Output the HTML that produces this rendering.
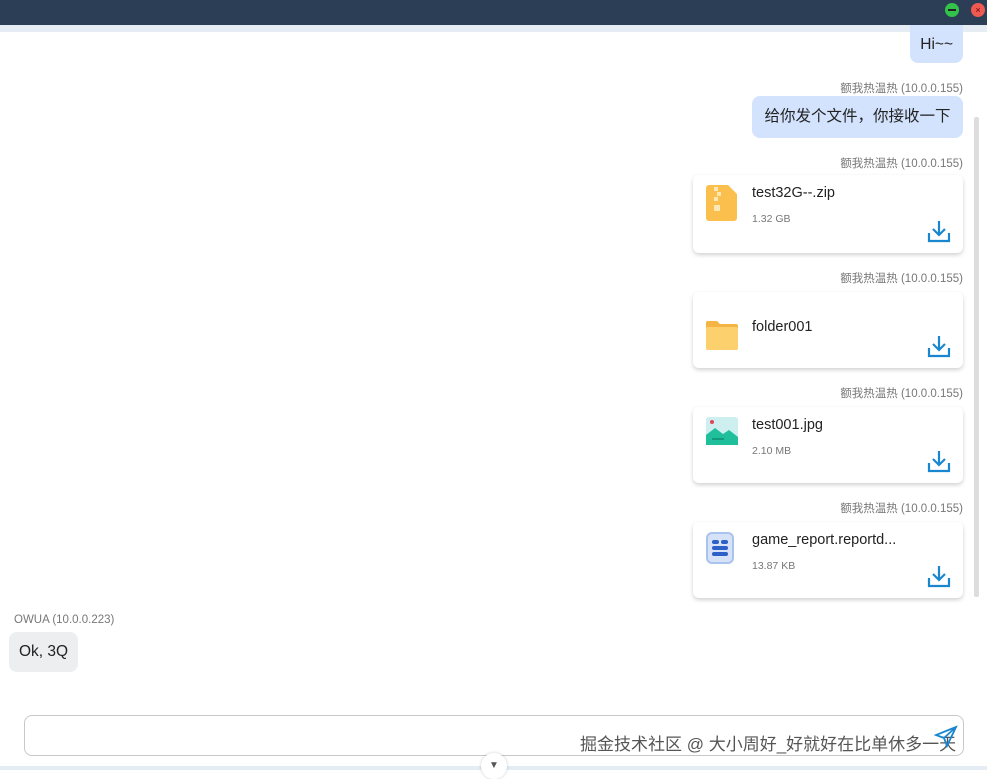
<!DOCTYPE html>
<html><head><meta charset="utf-8"><style>
*{box-sizing:border-box;margin:0;padding:0}
body{width:987px;height:770px;overflow:hidden;background:#fff;font-family:"Liberation Sans","Noto Sans CJK SC",sans-serif;position:relative;color:#222}
.top{position:absolute;left:0;top:0;width:987px;height:25px;background:#2c3e55}
.strip{position:absolute;left:0;top:25px;width:987px;height:7px;background:#e6ecf3}
.dot{position:absolute;top:3px;width:14px;height:14px;border-radius:50%}
.lbl{position:absolute;right:24px;font-size:11.5px;color:#777}
.bub{position:absolute;background:#d3e3fd;border-radius:8px;font-size:15.5px;padding:0 10px;line-height:42px}
.card{position:absolute;left:693px;width:270px;height:78px;background:#fff;border-radius:6px;box-shadow:0 2px 4px rgba(0,0,0,.18)}
.card .n{position:absolute;left:59px;top:10px;font-size:14.5px;color:#222}
.card .s{position:absolute;left:59px;top:38px;font-size:10.5px;color:#777}
.card .ic{position:absolute;left:13px;top:10px}
.card .dl{position:absolute;right:12px;bottom:10px}
</style></head><body>
<div class="top"><div class="dot" style="left:945px;background:#33c24a"><div style="position:absolute;left:3px;top:6px;width:8px;height:2px;background:#222"></div></div><div class="dot" style="left:971px;background:#ee5a52;font-size:9px;line-height:14px;text-align:center;color:#600">×</div></div>
<div class="strip"></div>
<div class="bub" style="right:24px;top:25px;height:38px;line-height:40px;border-top-left-radius:0;border-top-right-radius:0">Hi~~</div>
<div class="lbl" style="top:80px">额我热温热 (10.0.0.155)</div>
<div class="bub" style="right:24px;top:96px;height:42px;width:211px;text-align:center;padding:0">给你发个文件，你接收一下</div>
<div style="position:absolute;left:974px;top:117px;width:5px;height:480px;background:#ddd;border-radius:2px"></div>

<div class="lbl" style="top:155px">额我热温热 (10.0.0.155)</div>
<div class="card" style="top:175px"><svg class="ic" width="32" height="36" viewBox="0 0 32 36"><path d="M3 0h19l9 9v24a3 3 0 0 1-3 3H3a3 3 0 0 1-3-3V3a3 3 0 0 1 3-3z" fill="#fbbf4e"/><rect x="8" y="2" width="4" height="4" fill="#fde7b5"/><rect x="11" y="7" width="4" height="4" fill="#fde7b5"/><rect x="8" y="12" width="4" height="4" fill="#fde7b5"/><rect x="8" y="20" width="6" height="6" fill="#fde7b5"/></svg><div class="n">test32G--.zip</div><div class="s">1.32 GB</div>
<svg class="dl" width="24" height="24" viewBox="0 0 24 24" fill="none" stroke="#1a86d0" stroke-width="2.2"><path d="M12 2v13M6 10l6 6 6-6M2 14v8h20v-8"/></svg></div>

<div class="lbl" style="top:270px">额我热温热 (10.0.0.155)</div>
<div class="card" style="top:292px;height:76px"><svg class="ic" style="top:28px" width="32" height="30" viewBox="0 0 32 30"><path d="M0 3a2 2 0 0 1 2-2h9l3 3h16a2 2 0 0 1 2 2v22a2 2 0 0 1-2 2H2a2 2 0 0 1-2-2z" fill="#f4b545"/><rect x="0" y="7" width="32" height="23" rx="2" fill="#fcd06c"/></svg><div class="n" style="top:27px">folder001</div>
<svg class="dl" width="24" height="24" viewBox="0 0 24 24" fill="none" stroke="#1a86d0" stroke-width="2.2"><path d="M12 2v13M6 10l6 6 6-6M2 14v8h20v-8"/></svg></div>

<div class="lbl" style="top:385px">额我热温热 (10.0.0.155)</div>
<div class="card" style="top:407px;height:76px"><svg class="ic" width="32" height="28" viewBox="0 0 32 28"><rect width="32" height="28" rx="3" fill="#cdeff0"/><circle cx="6" cy="5" r="2" fill="#e5455a"/><path d="M0 28V18l9-7 8 6 6-4 9 7v8z" fill="#1fbf9c"/><path d="M6 22h12" stroke="#0d8f73" stroke-width="1.5"/></svg><div class="n">test001.jpg</div><div class="s">2.10 MB</div>
<svg class="dl" width="24" height="24" viewBox="0 0 24 24" fill="none" stroke="#1a86d0" stroke-width="2.2"><path d="M12 2v13M6 10l6 6 6-6M2 14v8h20v-8"/></svg></div>

<div class="lbl" style="top:500px">额我热温热 (10.0.0.155)</div>
<div class="card" style="top:522px;height:76px"><svg class="ic" width="30" height="32" viewBox="0 0 30 32"><rect x="1" y="1" width="26" height="30" rx="5" fill="#d6e2f7" stroke="#aac3ee" stroke-width="2"/><rect x="6" y="8" width="7" height="4" rx="2" fill="#2d5fc7"/><rect x="15" y="8" width="7" height="4" rx="2" fill="#2d5fc7"/><rect x="6" y="14" width="16" height="4" rx="2" fill="#2d5fc7"/><rect x="6" y="20" width="16" height="4" rx="2" fill="#2d5fc7"/></svg><div class="n">game_report.reportd...</div><div class="s">13.87 KB</div>
<svg class="dl" width="24" height="24" viewBox="0 0 24 24" fill="none" stroke="#1a86d0" stroke-width="2.2"><path d="M12 2v13M6 10l6 6 6-6M2 14v8h20v-8"/></svg></div>

<div style="position:absolute;left:14px;top:614px;font-size:11.5px;color:#777">OWUA (10.0.0.223)</div>
<div class="bub" style="left:9px;top:632px;height:40px;line-height:40px;background:#eceef0">Ok, 3Q</div>

<div style="position:absolute;left:24px;top:715px;width:940px;height:41px;border:1px solid #c8c8c8;border-radius:8px"></div>
<div style="position:absolute;left:580px;top:730px;font-size:17px;color:#555;text-shadow:0 0 2px #fff">掘金技术社区 @ 大小周好_好就好在比单休多一天</div>
<svg style="position:absolute;left:934px;top:725px" width="24" height="24" viewBox="0 0 24 24" fill="none" stroke="#1a86d0" stroke-width="1.8"><path d="M22 2L2 10l8 3 3 8zM10 13l12-11"/></svg>
<div style="position:absolute;left:0;top:766px;width:987px;height:4px;background:#e6ecf3"></div>
<div style="position:absolute;left:481px;top:753px;width:26px;height:26px;border-radius:50%;background:#fff;box-shadow:0 0 3px rgba(0,0,0,.2);text-align:center;font-size:10px;line-height:26px;color:#555">▼</div>
</body></html>
